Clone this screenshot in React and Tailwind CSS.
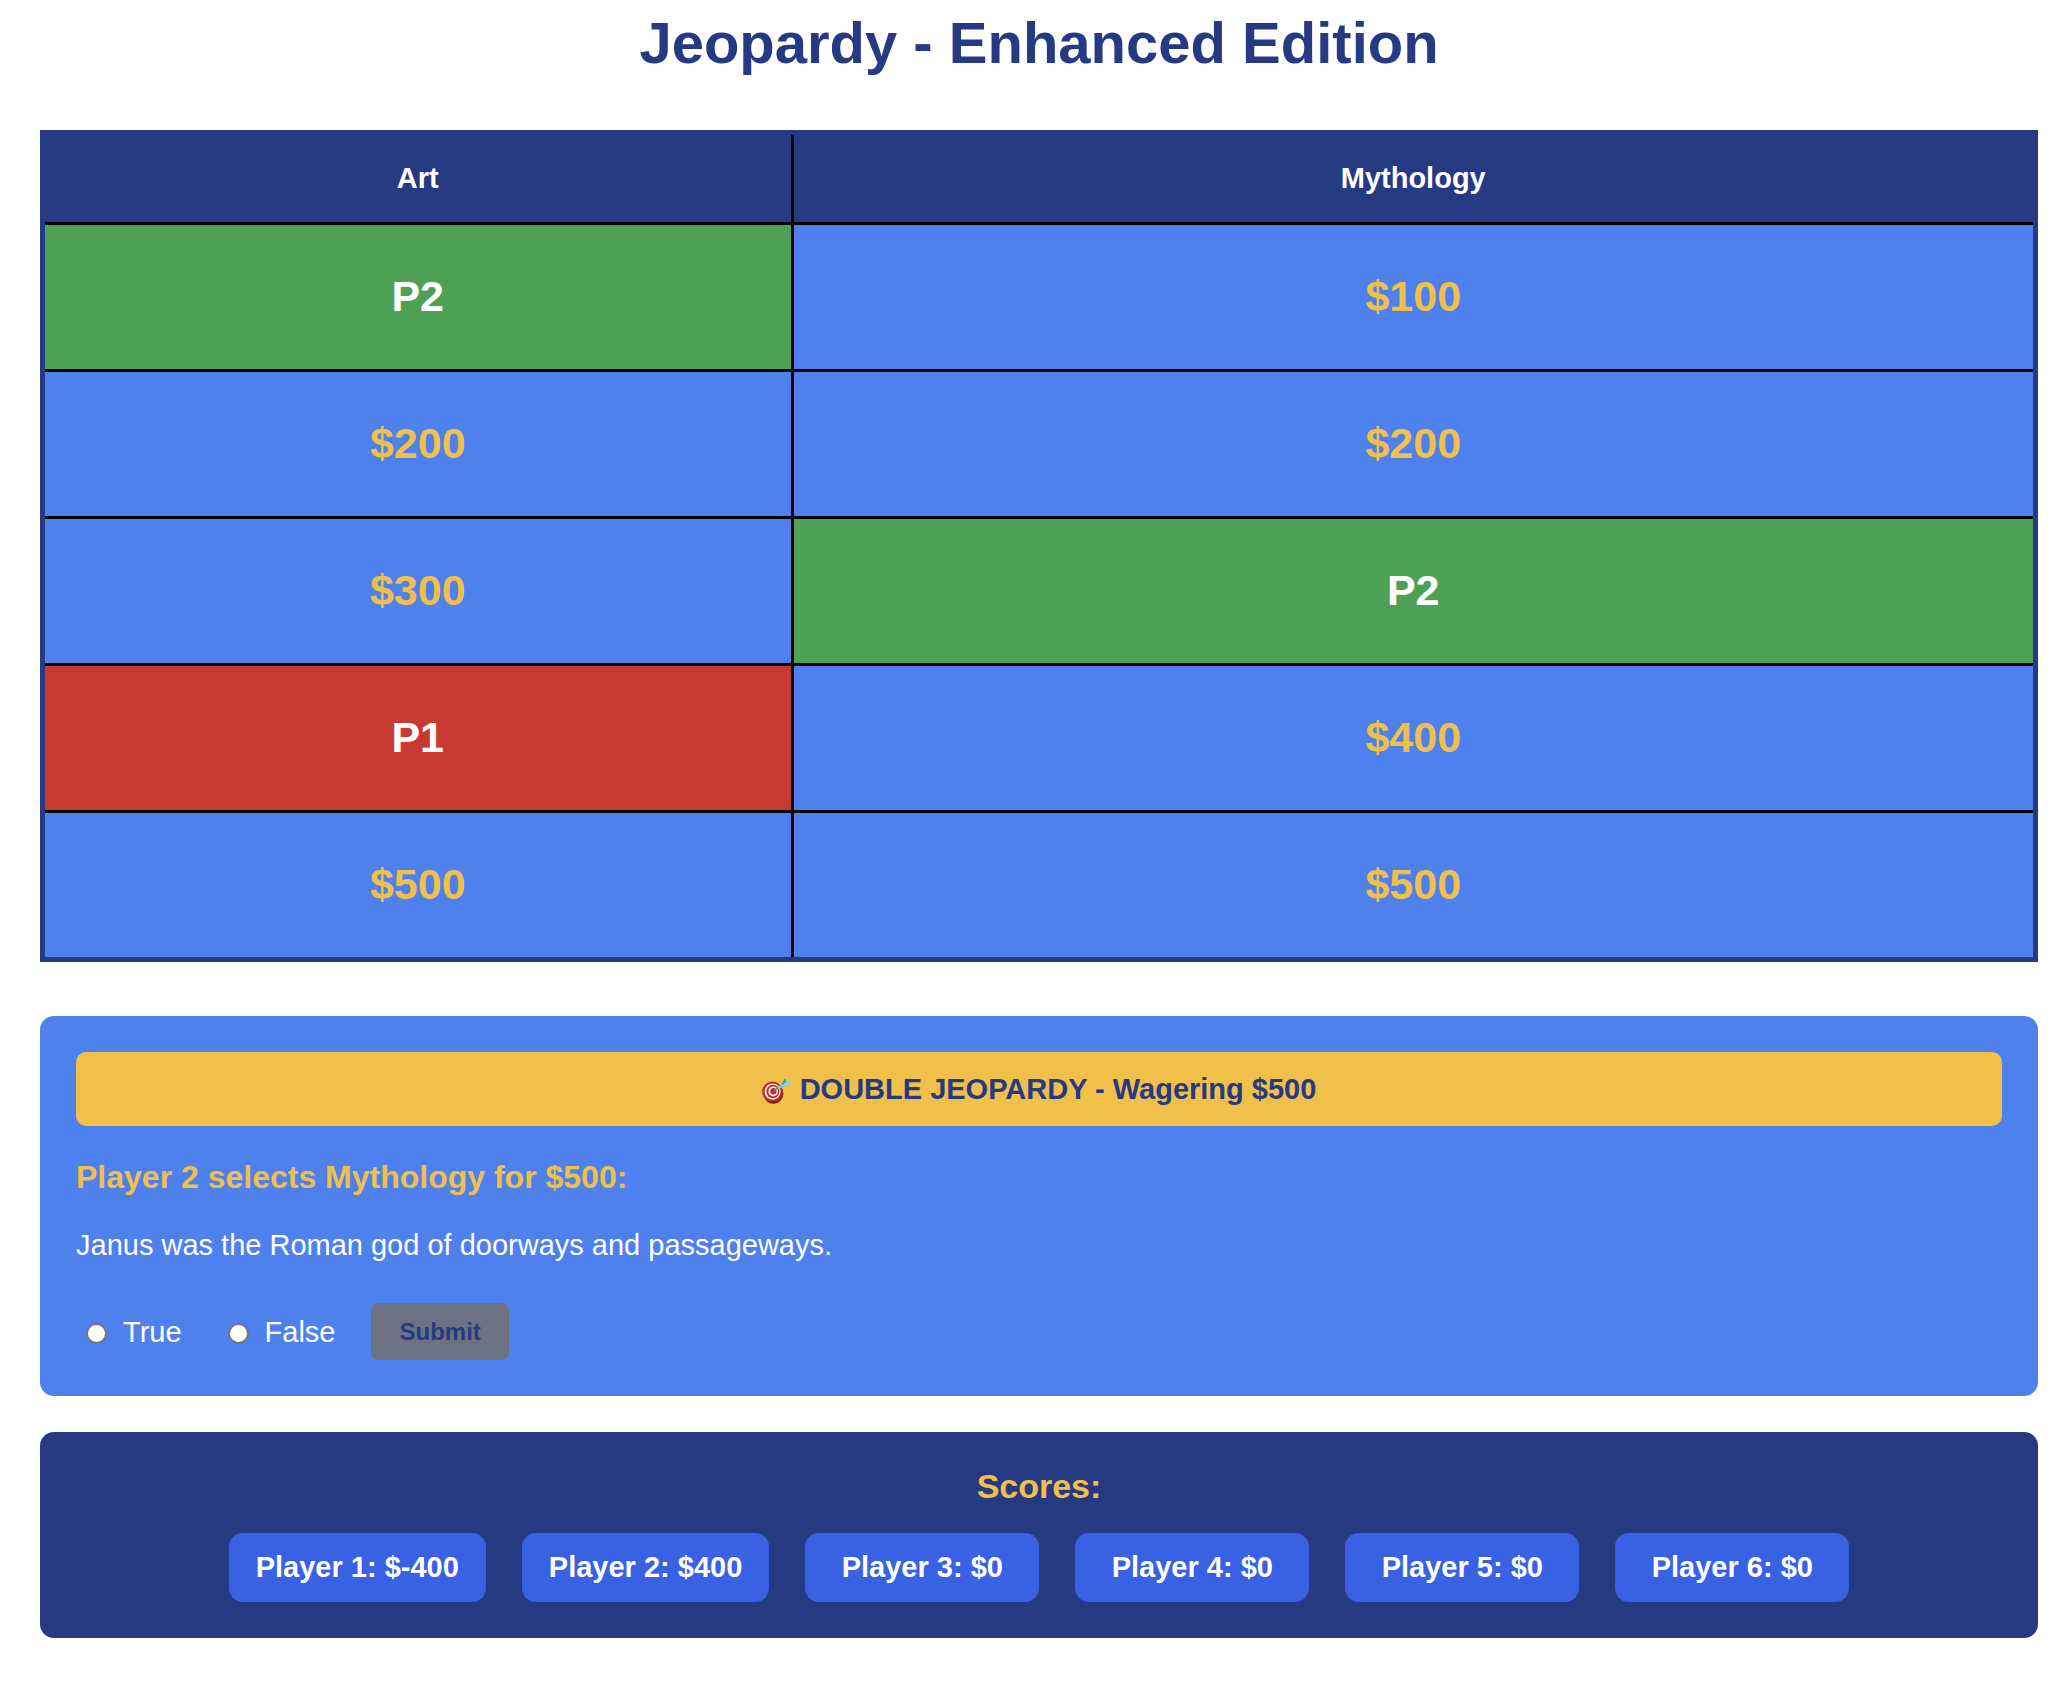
import { useState } from "react";

const categories = ["Art", "Mythology"];

const rows = [
  [{ text: "P2", state: "correct" }, { text: "$100", state: "open" }],
  [{ text: "$200", state: "open" }, { text: "$200", state: "open" }],
  [{ text: "$300", state: "open" }, { text: "P2", state: "correct" }],
  [{ text: "P1", state: "wrong" }, { text: "$400", state: "open" }],
  [{ text: "$500", state: "open" }, { text: "$500", state: "open" }],
];

const scores = [-400, 400, 0, 0, 0, 0];

const cellStyles = {
  open: "bg-[#4e81ee] text-[#f1c04b]",
  correct: "bg-[#4ea154] text-white",
  wrong: "bg-[#c83a31] text-white",
};

function TargetIcon() {
  return (
    <svg viewBox="0 0 30 26" className="mt-1 h-[26px] w-[30px] shrink-0" aria-hidden="true">
      <ellipse cx="11.4" cy="15.4" rx="10" ry="10.4" fill="#7d1815" />
      <ellipse cx="10.4" cy="13.8" rx="10.2" ry="10.2" fill="#c32a26" />
      <ellipse cx="10.6" cy="13.6" rx="8" ry="8.1" fill="#f6eeee" />
      <ellipse cx="10.9" cy="13.5" rx="6.5" ry="6.7" fill="#c32a26" />
      <ellipse cx="11.2" cy="13.4" rx="4.8" ry="5" fill="#f6eeee" />
      <ellipse cx="11.4" cy="13.3" rx="3" ry="3.2" fill="#c32a26" />
      <path d="M11.4 13.2 L17 9.4" stroke="#8d6f63" strokeWidth="1.4" />
      <path d="M15.2 9 L22 4.4 L23.6 7 L17 11.8 Z" fill="#59bccb" />
      <path d="M19.8 6 L22.6 0.6 L24.6 3.6 L22.6 6.2 Z" fill="#3e9aab" />
      <path d="M21.6 6.2 L24.6 3.4 L29.6 5 L25.8 8.4 L21.8 7.8 Z" fill="#7fd3dc" />
      <path d="M16 10.4 L25.4 4.6" stroke="#a5e4e8" strokeWidth="0.8" />
    </svg>
  );
}

export default function App() {
  const [answer, setAnswer] = useState("");

  return (
    <main className="min-h-screen bg-white pt-[10px] pr-7 pb-[52px] pl-10 font-['Liberation_Sans',Arial,sans-serif] text-[29px] leading-[34px]">
      <h1 className="mb-[54px] text-center text-[58px] leading-[66px] font-bold text-[#263983]">
        Jeopardy - Enhanced Edition
      </h1>

      <table className="w-full table-fixed border-separate border-spacing-0 border-5 border-[#263983] text-center font-bold">
        <colgroup>
          <col className="w-[37.5%]" />
          <col />
        </colgroup>
        <thead>
          <tr>
            {categories.map((name) => (
              <th
                key={name}
                scope="col"
                className="h-[87px] border-l-3 border-black bg-[#263983] pb-[2px] text-white first:border-l-0"
              >
                {name}
              </th>
            ))}
          </tr>
        </thead>
        <tbody>
          {rows.map((row, i) => (
            <tr key={i}>
              {row.map((cell, j) => (
                <td key={j} className="h-[147px] border-t-3 border-l-3 border-black p-0 first:border-l-0">
                  <button
                    type="button"
                    className={`block h-36 w-full pb-[2px] text-[43px] font-bold ${cellStyles[cell.state]}`}
                  >
                    {cell.text}
                  </button>
                </td>
              ))}
            </tr>
          ))}
        </tbody>
      </table>

      <section className="mt-[54px] rounded-[14px] bg-[#4e81ee] p-9 text-white">
        <div className="mb-8 flex items-center justify-center gap-2 rounded-[10px] bg-[#f1c04b] py-5 font-bold text-[#263983]">
          <TargetIcon />
          <span>DOUBLE JEOPARDY - Wagering $500</span>
        </div>
        <h2 className="mb-8 text-[32px] leading-[38px] font-bold text-[#f1c04b]">
          Player 2 selects Mythology for $500:
        </h2>
        <p>Janus was the Roman god of doorways and passageways.</p>
        <form className="mt-[41px] flex items-center gap-9" onSubmit={(e) => e.preventDefault()}>
          {["True", "False"].map((option) => (
            <label key={option} className="flex items-center gap-4 pl-[10px]">
              <input
                type="radio"
                name="answer"
                value={option}
                checked={answer === option}
                onChange={() => setAnswer(option)}
                className="mt-1 size-[21px] appearance-none rounded-full border-2 border-[#767676] bg-white checked:border-6 checked:border-[#263983]"
              />
              {option}
            </label>
          ))}
          <button
            type="submit"
            disabled={!answer}
            className="h-[57px] rounded-[7px] bg-[#f1c04b] px-7 text-[24px] font-bold text-[#263983] disabled:bg-[#6c7281]"
          >
            Submit
          </button>
        </form>
      </section>

      <section className="mt-9 rounded-[14px] bg-[#263983] p-9">
        <h2 className="mb-[29px] text-center text-[34px] leading-[36px] font-bold text-[#f1c04b]">Scores:</h2>
        <ul className="flex flex-wrap justify-center gap-9">
          {scores.map((score, i) => (
            <li
              key={i}
              className="flex h-[69px] min-w-[234px] items-center justify-center rounded-[14px] bg-[#3862e3] px-[27px] pb-[2px] font-bold text-white"
            >
              Player {i + 1}: ${score}
            </li>
          ))}
        </ul>
      </section>
    </main>
  );
}
